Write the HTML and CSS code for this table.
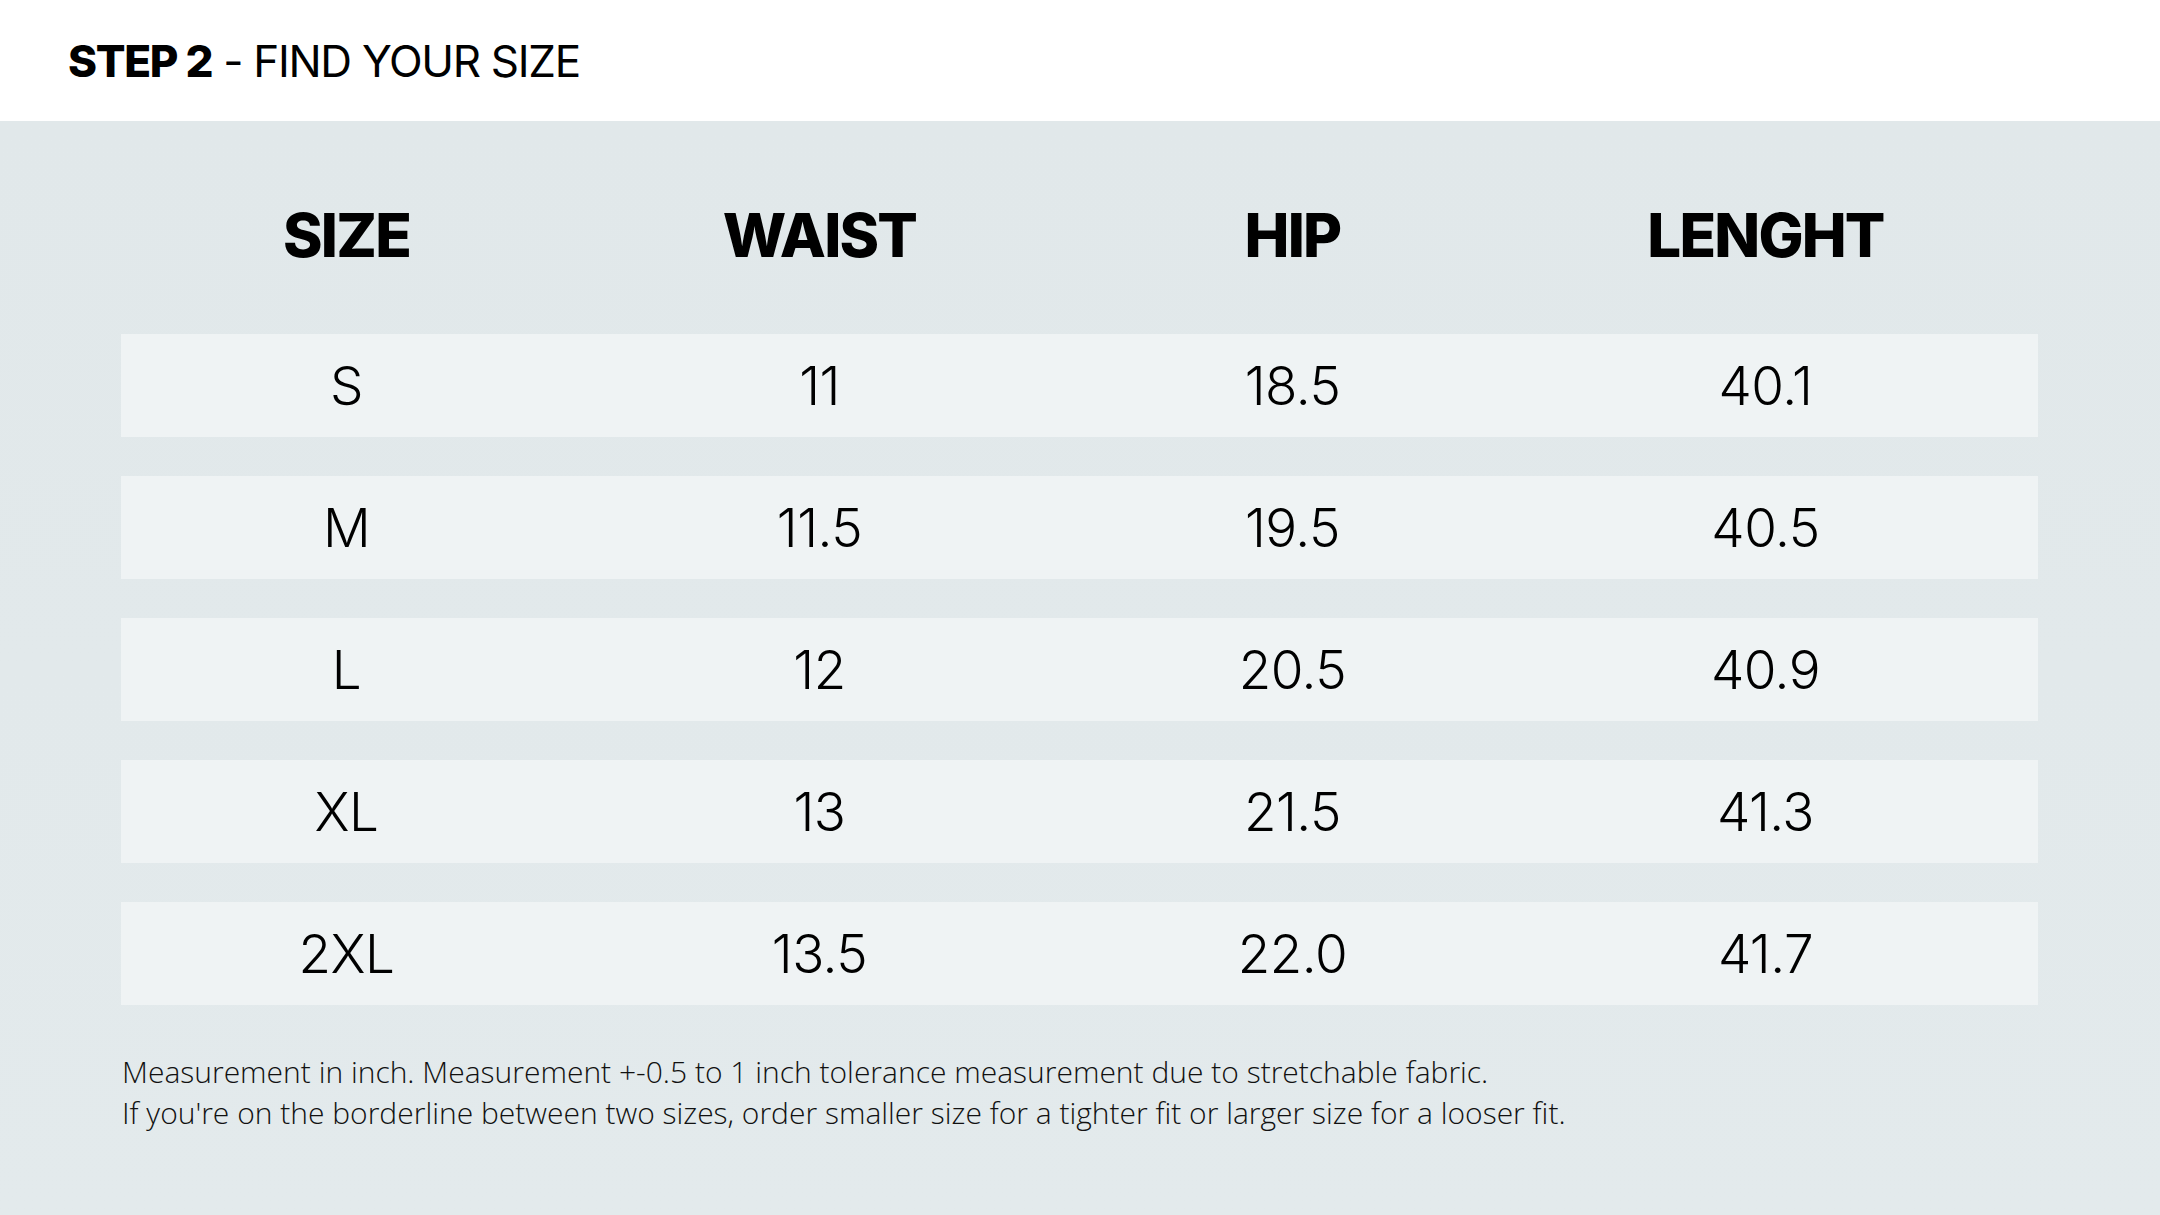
FILE: index.html
```html
<!DOCTYPE html>
<html lang="en">
<head>
<meta charset="utf-8">
<title>Step 2 - Find your size</title>
<link rel="stylesheet" href="styles.css">
</head>
<body>
<header class="top">
  <h1 class="title"><strong>STEP 2</strong> - FIND YOUR SIZE</h1>
</header>
<main class="panel">
  <div class="chart">
    <div class="head">
      <div>SIZE</div><div>WAIST</div><div>HIP</div><div>LENGHT</div>
    </div>
    <div class="row"><div>S</div><div>11</div><div>18.5</div><div>40.1</div></div>
    <div class="row"><div>M</div><div>11.5</div><div>19.5</div><div>40.5</div></div>
    <div class="row"><div>L</div><div>12</div><div>20.5</div><div>40.9</div></div>
    <div class="row"><div>XL</div><div>13</div><div>21.5</div><div>41.3</div></div>
    <div class="row"><div>2XL</div><div>13.5</div><div>22.0</div><div>41.7</div></div>
  </div>
  <div class="note">
    <p>Measurement in inch. Measurement +-0.5 to 1 inch tolerance measurement due to stretchable fabric.</p>
    <p>If you're on the borderline between two sizes, order smaller size for a tighter fit or larger size for a looser fit.</p>
  </div>
</main>
</body>
</html>
```
FILE: styles.css
```css
html, body {
  margin: 0;
  padding: 0;
  background: #e2e9eb;
}
body {
  width: 2160px;
  height: 1215px;
  overflow: hidden;
  font-family: "Inter", "Liberation Sans", sans-serif;
  color: #000;
}
.top {
  height: 121px;
  background: #fff;
  display: flex;
  align-items: center;
  padding-left: 68px;
}
.title {
  margin: 0;
  font-size: 44px;
  font-weight: 400;
  letter-spacing: -1.3px;
  line-height: 1;
}
.title strong {
  font-weight: 800;
}
.panel {
  height: 1094px;
  background: linear-gradient(180deg, #e1e8ea 0%, #e3eaec 100%);
  padding: 60px 0 0 110px;
  box-sizing: border-box;
}
.chart {
  width: 1928px;
  display: flex;
  flex-direction: column;
  gap: 39px;
}
.head, .row {
  display: grid;
  grid-template-columns: repeat(4, 473px);
  align-items: center;
  justify-items: center;
}
.head {
  height: 108px;
  margin-bottom: 6px;
  font-weight: 800;
  font-size: 60px;
  letter-spacing: -1.8px;
}
.row {
  height: 103px;
  background: linear-gradient(90deg, transparent 11px, #eff3f4 11px);
  font-weight: 300;
  font-size: 53px;
  letter-spacing: -0.5px;
}
.note {
  margin-top: 46px;
  padding-left: 12px;
  font-family: "Open Sans", "Liberation Sans", sans-serif;
  font-weight: 300;
  font-size: 30px;
  line-height: 41px;
  color: #111;
}
.note p {
  margin: 0;
}
```
